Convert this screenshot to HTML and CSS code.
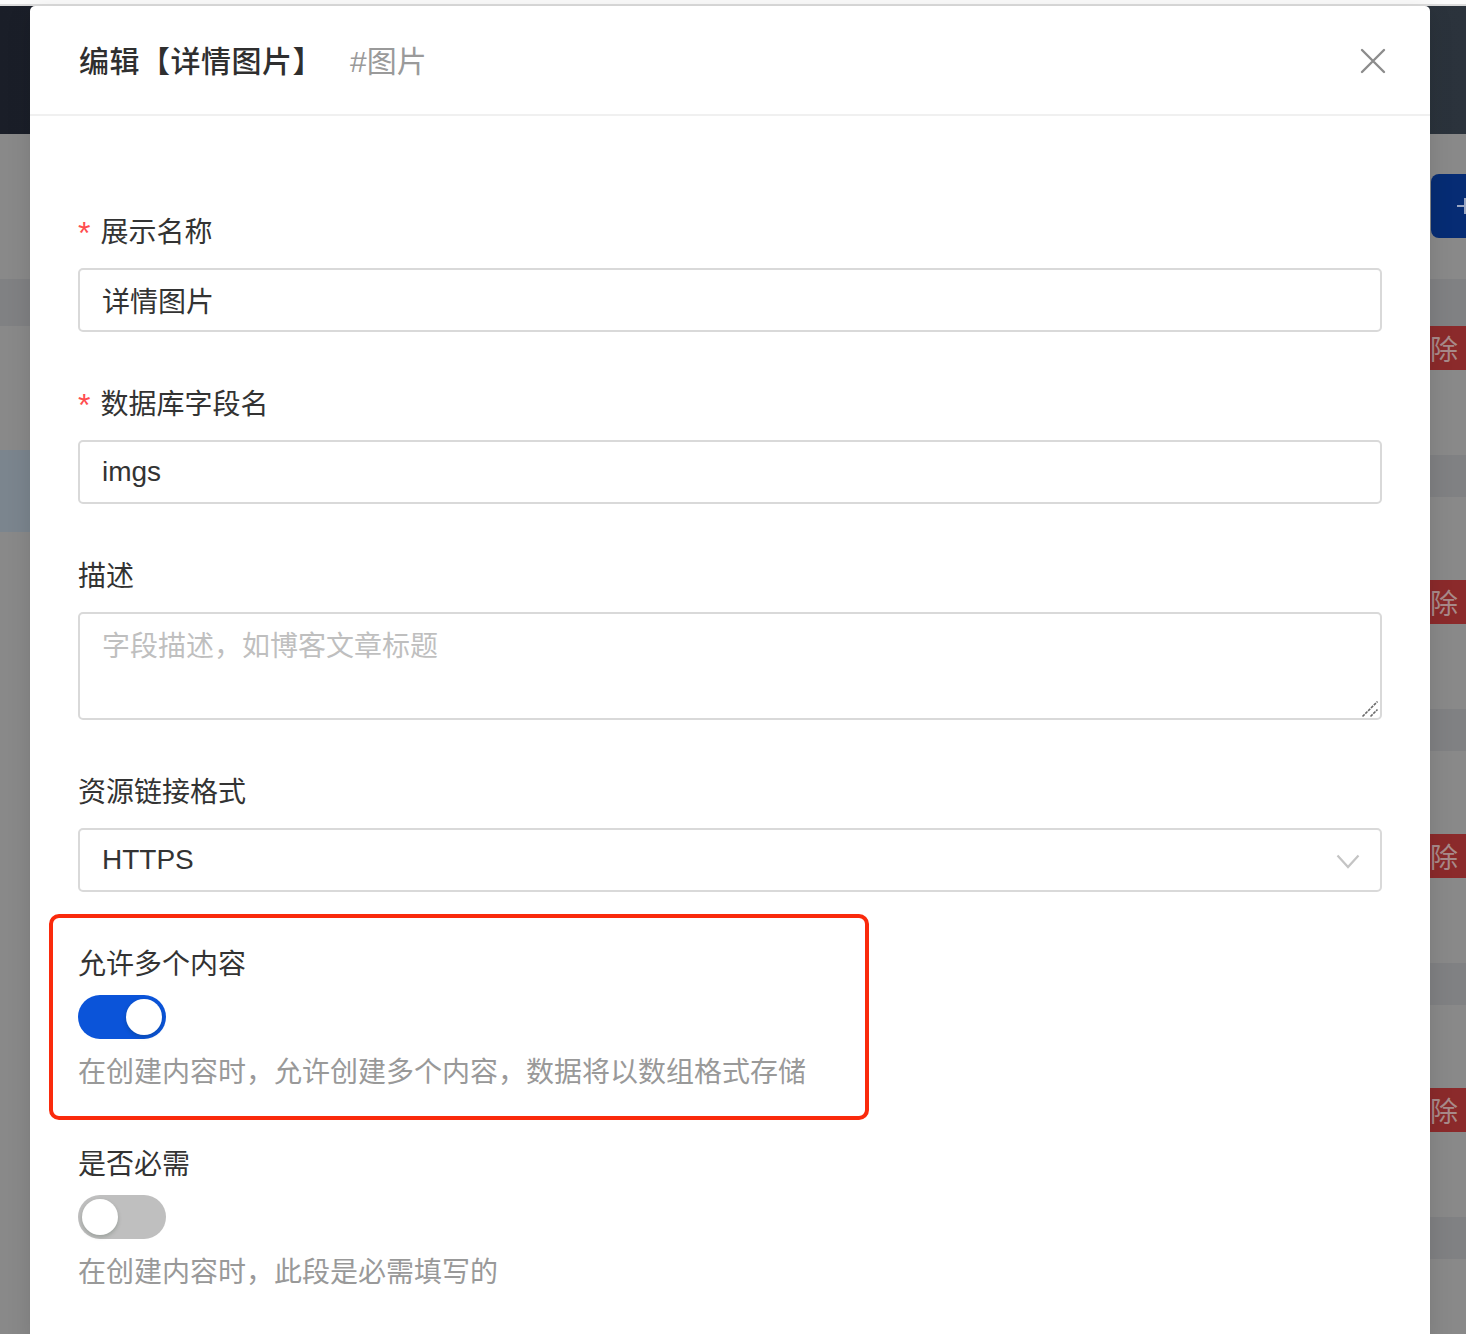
FILE: index.html
```html
<!DOCTYPE html>
<html lang="zh-CN">
<head>
<meta charset="utf-8">
<title>编辑【详情图片】</title>
<link rel="stylesheet" href="styles.css">
</head>
<body>
<div class="app">
  <div class="browser-bar"></div>
  <div class="topnav"></div>
  <div class="main">
    <aside class="sidebar">
      <div class="side-spacer"></div>
      <div class="side-band"></div>
      <div class="side-gap"></div>
      <div class="side-active"></div>
    </aside>
    <section class="content">
      <div class="toolbar">
        <span class="btn-primary">
          <svg width="20" height="20" viewBox="0 0 20 20"><path d="M10 2 V18 M2 10 H18" stroke="#9aa6c2" stroke-width="2" fill="none"/></svg>
        </span>
      </div>
      <div class="thead"></div>
      <div class="row"><div class="row-actions"><span class="btn-danger">删除</span></div><div class="row-band"></div></div>
      <div class="row"><div class="row-actions"><span class="btn-danger">删除</span></div><div class="row-band"></div></div>
      <div class="row"><div class="row-actions"><span class="btn-danger">删除</span></div><div class="row-band"></div></div>
      <div class="row"><div class="row-actions"><span class="btn-danger">删除</span></div><div class="row-band"></div></div>
    </section>
  </div>
</div>

<div class="modal">
  <div class="modal-header">
    <h1 class="modal-title">编辑【详情图片】<span class="modal-sub">#图片</span></h1>
    <span class="close">
      <svg width="26" height="26" viewBox="0 0 26 26"><path d="M2 2 L24 24 M24 2 L2 24" stroke="#8c8c8c" stroke-width="2.4" fill="none" stroke-linecap="round"/></svg>
    </span>
  </div>
  <div class="modal-body">
    <div class="item">
      <div class="label"><span class="req">*</span>展示名称</div>
      <input class="input" value="详情图片" readonly>
    </div>
    <div class="item">
      <div class="label"><span class="req">*</span>数据库字段名</div>
      <input class="input" value="imgs" readonly>
    </div>
    <div class="item">
      <div class="label">描述</div>
      <div class="textarea-wrap">
        <textarea class="textarea" placeholder="字段描述，如博客文章标题"></textarea>
        <svg class="resize-grip" width="18" height="18" viewBox="0 0 18 18"><path d="M1.5 16.5 L16.5 1.5 M9.5 16.5 L16.5 9.5" stroke="#6b6b6b" stroke-width="1.6" stroke-dasharray="3 1" fill="none"/></svg>
      </div>
    </div>
    <div class="item">
      <div class="label">资源链接格式</div>
      <div class="select">
        <span>HTTPS</span>
        <svg class="chevron" width="24" height="15" viewBox="0 0 24 15"><path d="M1.5 1.5 L12 13 L22.5 1.5" stroke="#c4c4c4" stroke-width="2.2" fill="none"/></svg>
      </div>
    </div>
    <div class="item item-switch highlighted">
      <div class="label">允许多个内容</div>
      <span class="switch on"><span class="knob"></span></span>
      <div class="help">在创建内容时，允许创建多个内容，数据将以数组格式存储</div>
    </div>
    <div class="item item-switch">
      <div class="label">是否必需</div>
      <span class="switch"><span class="knob"></span></span>
      <div class="help">在创建内容时，此段是必需填写的</div>
    </div>
  </div>
</div>
</body>
</html>
```
FILE: styles.css
```css
html, body {
  margin: 0;
  padding: 0;
  height: 1334px;
  overflow: hidden;
}
body {
  font-family: "Liberation Sans", "Noto Sans CJK SC", sans-serif;
  background: #898989;
  position: relative;
}

/* ---------- page behind the dialog (dimmed) ---------- */
.app {
  display: flex;
  flex-direction: column;
  width: 1466px;
}
.browser-bar {
  height: 4px;
  background: #fbfbfb;
  border-bottom: 2px solid #dcdcdc;
}
.topnav {
  height: 128px;
  background: linear-gradient(90deg, #1a1e28 0%, #222832 50%, #2b333c 100%);
}
.main {
  display: flex;
}
.sidebar {
  width: 220px;
  display: flex;
  flex-direction: column;
  flex-shrink: 0;
}
.side-spacer { height: 145px; }
.side-band { height: 47px; background: #808183; }
.side-gap { height: 124px; }
.side-active { height: 82px; background: #7b858e; }

.content {
  flex: 1;
  display: flex;
  flex-direction: column;
  overflow: hidden;
}
.toolbar {
  height: 145px;
  display: flex;
  justify-content: flex-end;
  align-items: flex-start;
}
.btn-primary {
  margin-top: 40px;
  height: 64px;
  width: 200px;
  margin-right: -165px;
  background: #062c74;
  border-radius: 8px;
  display: flex;
  align-items: center;
  padding-left: 24px;
  box-sizing: border-box;
}
.thead {
  height: 47px;
  background: #808183;
}
.row {
  height: 254px;
  display: flex;
  flex-direction: column;
}
.row-actions {
  height: 129px;
  display: flex;
  justify-content: flex-end;
  align-items: flex-start;
}
.btn-danger {
  height: 44px;
  line-height: 44px;
  padding: 0 22px;
  margin-right: -14px;
  background: #8b2a2b;
  color: #a88a8a;
  font-size: 28px;
  font-family: "Noto Sans CJK SC", sans-serif;
}
.row-band {
  height: 42px;
  background: #808183;
}

/* ---------- dialog ---------- */
.modal {
  position: absolute;
  top: 6px;
  left: 30px;
  width: 1400px;
  height: 1340px;
  background: #fff;
  border-radius: 5px 5px 0 0;
  box-shadow: 0 6px 24px rgba(0, 0, 0, 0.12);
}
.modal-header {
  height: 108px;
  border-bottom: 2px solid #f0f0f0;
  display: flex;
  align-items: center;
  justify-content: space-between;
  padding: 0 44px 0 49px;
}
.modal-title {
  margin: 0;
  font-family: "Noto Sans CJK SC", sans-serif;
  font-size: 30px;
  font-weight: 500;
  color: #2f2f2f;
  line-height: 44px;
  display: flex;
  align-items: baseline;
  letter-spacing: 0.5px;
}
.modal-sub {
  margin-left: 27px;
  font-family: "Liberation Sans", "Noto Sans CJK SC", sans-serif;
  font-weight: 400;
  color: #9a9a9a;
  letter-spacing: 0;
}
.close {
  display: flex;
  width: 26px;
  height: 26px;
  margin-top: 2px;
}

.modal-body {
  padding: 92px 48px 0 48px;
  display: flex;
  flex-direction: column;
}
.item {
  display: flex;
  flex-direction: column;
  margin-bottom: 48px;
  position: relative;
}
.label {
  height: 44px;
  line-height: 44px;
  font-size: 28px;
  color: #333;
  margin-bottom: 16px;
  font-family: "Noto Sans CJK SC", sans-serif;
  display: flex;
  align-items: center;
}
.req {
  font-family: "Liberation Sans", sans-serif;
  color: #ff4d4f;
  font-size: 32px;
  margin: 0 10px 0 0;
  line-height: 1;
  position: relative;
  top: 3px;
}
.input, .textarea, .select {
  box-sizing: border-box;
  width: 100%;
  border: 2px solid #d9d9d9;
  border-radius: 5px;
  font-family: "Liberation Sans", "Noto Sans CJK SC", sans-serif;
  font-size: 28px;
  color: #333;
  background: #fff;
  outline: none;
  margin: 0;
}
.input {
  height: 64px;
  padding: 0 22px;
}
.textarea-wrap {
  position: relative;
  display: flex;
}
.textarea {
  height: 108px;
  padding: 8px 22px;
  line-height: 44px;
  resize: none;
  display: block;
}
.textarea::placeholder {
  color: #bfbfbf;
  font-family: "Noto Sans CJK SC", sans-serif;
}
.resize-grip {
  position: absolute;
  right: 3px;
  bottom: 2px;
}
.select {
  height: 64px;
  padding: 0 22px;
  display: flex;
  align-items: center;
  justify-content: space-between;
}
.chevron {
  margin-right: -2px;
  margin-top: 2px;
}

.item-switch .label {
  margin-bottom: 11px;
}
.switch {
  width: 88px;
  height: 44px;
  border-radius: 22px;
  background: #bfbfbf;
  display: flex;
  align-items: center;
  padding: 0 4px;
  box-sizing: border-box;
}
.switch.on {
  background: #0b54d9;
  justify-content: flex-end;
}
.knob {
  width: 36px;
  height: 36px;
  border-radius: 50%;
  background: #fff;
  box-shadow: 0 2px 4px rgba(0, 35, 11, 0.2);
}
.help {
  margin-top: 9px;
  height: 44px;
  line-height: 44px;
  font-size: 28px;
  color: #999;
  font-family: "Noto Sans CJK SC", sans-serif;
}

/* annotation frame around the highlighted item */
.highlighted::before {
  content: "";
  position: absolute;
  left: -29px;
  top: -26px;
  width: 820px;
  height: 206px;
  box-sizing: border-box;
  border: 4px solid #fa2a0c;
  border-radius: 10px;
  pointer-events: none;
}
```
